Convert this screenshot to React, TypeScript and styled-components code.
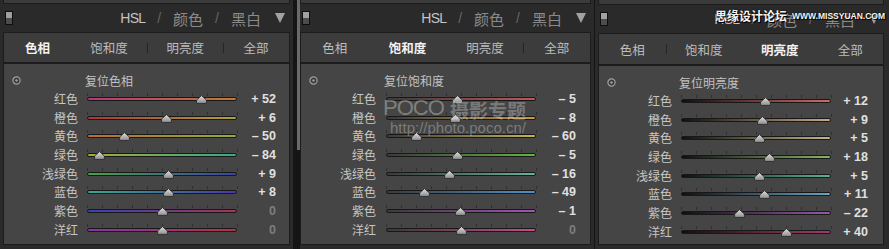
import styled, { createGlobalStyle } from "styled-components";

const Global = createGlobalStyle`
  html, body { margin: 0; padding: 0; background: #161616; }
  body { font-family: "Noto Sans CJK SC", "Liberation Sans", sans-serif; }
  * { box-sizing: border-box; }
`;

type Slider = { name: string; value: number; from: string; to: string };

interface PanelData {
  active: number;
  reset: string;
  w: number;
  pl: number;
  pr: number;
  labelW: number;
  gap: number;
  padR: number;
  strip: number;
  tabsH: number;
  sliders: Slider[];
}

const TABS = ["色相", "饱和度", "明亮度", "全部"];

const Screen = styled.div`
  display: flex;
  width: 889px;
  height: 249px;
  background: #161616;
  overflow: hidden;
`;

const Column = styled.div<{ $w: number; $pl: number; $pr: number }>`
  position: relative;
  flex: none;
  width: ${p => p.$w}px;
  height: 249px;
  padding: 0 ${p => p.$pr}px 0 ${p => p.$pl}px;
  background: #2a2a2a;
  display: flex;
  flex-direction: column;
`;

const Gutter = styled.div<{ $w: number; $bar?: boolean }>`
  flex: none;
  width: ${p => p.$w}px;
  background: #151515;
  display: flex;
  justify-content: flex-end;

  &::after {
    content: "";
    display: ${p => (p.$bar ? "block" : "none")};
    width: 3px;
    height: 150px;
    background: #6a6a6a;
  }
`;

const TopStrip = styled.div<{ $h: number }>`
  height: ${p => p.$h}px;
  background: #3b3b3b;
  border: 1px solid #1c1c1c;
  border-top: none;
`;

const Header = styled.div`
  height: 28px;
  display: flex;
  align-items: center;
  padding: 0 5px 0 2px;
`;

const Toggle = styled.span`
  width: 8px;
  height: 14px;
  border: 1px solid #0e0e0e;
  background: linear-gradient(#a0a0a0 0 50%, #4c4c4c 50% 100%);
`;

const Nav = styled.div`
  margin-left: auto;
  display: flex;
  align-items: center;
  gap: 12px;
`;

const NavItem = styled.span<{ $on?: boolean }>`
  font-size: 15px;
  line-height: 1;
  color: ${p => (p.$on ? "#c4c4c4" : "#8a8a8a")};
`;

const NavLatin = styled(NavItem)`
  font-family: "Liberation Sans", sans-serif;
  font-size: 14px;
  letter-spacing: -0.8px;
`;

const Slash = styled.span`
  font-family: "Liberation Sans", sans-serif;
  font-size: 14px;
  color: #666;
`;

const Arrow = styled.span`
  width: 0;
  height: 0;
  margin-left: 2px;
  border-left: 5px solid transparent;
  border-right: 5px solid transparent;
  border-top: 10px solid #a2a2a2;
`;

const Tabs = styled.div<{ $h: number }>`
  height: ${p => p.$h}px;
  display: grid;
  grid-template-columns: 67fr 77fr 76fr 66fr;
  background: #3c3c3c;
  border: 1px solid #1c1c1c;
`;

const Tab = styled.div<{ $on: boolean }>`
  position: relative;
  display: flex;
  align-items: center;
  justify-content: center;
  font-size: 12.5px;
  font-weight: ${p => (p.$on ? 700 : 400)};
  color: ${p => (p.$on ? "#f2f2f2" : "#bdbdbd")};

  & + &::before {
    content: "";
    position: absolute;
    left: 0;
    top: 50%;
    margin-top: -5px;
    width: 1px;
    height: 10px;
    background: #262626;
  }
`;

const Content = styled.div<{ $padR: number }>`
  flex: 1;
  margin-bottom: 4px;
  padding: 7px ${p => p.$padR}px 0 0;
  background: #454545;
  border: 1px solid #1c1c1c;
`;

const Row = styled.div<{ $labelW: number; $gap: number }>`
  display: grid;
  grid-template-columns: ${p => p.$labelW}px 150px 1fr;
  column-gap: ${p => p.$gap}px;
  align-items: center;
  height: 18.7px;
`;

const ResetIcon = styled.svg`
  margin-left: 8px;
`;

const ResetText = styled.span`
  margin-left: -2px;
  font-size: 12px;
  color: #c2c2c2;
  white-space: nowrap;
`;

const Label = styled.span`
  text-align: right;
  font-size: 12px;
  line-height: 1;
  color: #c6c6c6;
  white-space: nowrap;
`;

const TrackArea = styled.div`
  position: relative;
  height: 100%;
  display: flex;
  align-items: center;

  &::before {
    content: "";
    position: absolute;
    left: 0;
    width: 151px;
    top: calc(50% - 6px);
    height: 3px;
    background: repeating-linear-gradient(90deg, #303030 0 1px, transparent 1px 15px);
  }
`;

const Line = styled.div<{ $from: string; $to: string }>`
  width: 100%;
  height: 4px;
  border: 1px solid #181818;
  border-radius: 2px;
  background: linear-gradient(90deg, ${p => p.$from}, ${p => p.$to});
`;

const Thumb = styled.svg`
  position: absolute;
  top: calc(50% - 4px);
`;

const Value = styled.span<{ $zero: boolean }>`
  text-align: right;
  font-family: "Liberation Sans", sans-serif;
  font-size: 12.5px;
  font-weight: 700;
  color: ${p => (p.$zero ? "#7e7e7e" : "#e0e0e0")};
  white-space: nowrap;
`;

const Mark = styled.span`
  position: absolute;
  white-space: nowrap;
  pointer-events: none;
`;

const PocoMark = styled(Mark)`
  left: 83px;
  top: 95px;
  font-family: "Liberation Sans", sans-serif;
  font-size: 22px;
  letter-spacing: -1px;
  color: rgba(255, 255, 255, 0.33);
`;

const PocoCn = styled(Mark)`
  left: 150px;
  top: 96px;
  font-size: 19px;
  font-weight: 700;
  color: rgba(255, 255, 255, 0.3);
`;

const PocoUrl = styled(Mark)`
  left: 90px;
  top: 119px;
  font-family: "Liberation Sans", sans-serif;
  font-size: 15px;
  color: rgba(255, 255, 255, 0.3);
`;

const SiteCn = styled(Mark)`
  left: 120px;
  top: 7px;
  font-size: 12px;
  font-weight: 700;
  color: #f4f4f4;
  text-shadow: 0 0 2px #000, 1px 1px 0 #000;
`;

const SiteUrl = styled(Mark)`
  left: 197px;
  top: 11px;
  font-family: "Liberation Sans", sans-serif;
  font-size: 8.5px;
  font-weight: 700;
  color: #f4f4f4;
  text-shadow: 0 0 2px #000, 1px 1px 0 #000;
`;

const fmt = (v: number) => (v > 0 ? `+ ${v}` : v < 0 ? `– ${-v}` : "0");

const hue: Slider[] = [
  { name: "红色", value: 52, from: "#b8367e", to: "#c27a34" },
  { name: "橙色", value: 6, from: "#ac3434", to: "#aca43a" },
  { name: "黄色", value: -50, from: "#bc6c34", to: "#8eae3c" },
  { name: "绿色", value: -84, from: "#a4ac38", to: "#38a88c" },
  { name: "浅绿色", value: 9, from: "#44a448", to: "#3844a8" },
  { name: "蓝色", value: 8, from: "#34a890", to: "#4838a8" },
  { name: "紫色", value: 0, from: "#3444b4", to: "#a83458" },
  { name: "洋红", value: 0, from: "#8834a8", to: "#b43440" },
];

const sat: Slider[] = [
  { name: "红色", value: -5, from: "#3a3a3a", to: "#c05858" },
  { name: "橙色", value: -8, from: "#3a3a3a", to: "#c89a48" },
  { name: "黄色", value: -60, from: "#3a3a3a", to: "#c4b454" },
  { name: "绿色", value: -5, from: "#3a3a3a", to: "#64b444" },
  { name: "浅绿色", value: -16, from: "#3a3a3a", to: "#64b4a0" },
  { name: "蓝色", value: -49, from: "#3a3a3a", to: "#5090c8" },
  { name: "紫色", value: -1, from: "#3a3a3a", to: "#a454b8" },
  { name: "洋红", value: 0, from: "#3a3a3a", to: "#c84c88" },
];

const lum: Slider[] = [
  { name: "红色", value: 12, from: "#101010", to: "#d46868" },
  { name: "橙色", value: 9, from: "#101010", to: "#c8a888" },
  { name: "黄色", value: 5, from: "#101010", to: "#c4b888" },
  { name: "绿色", value: 18, from: "#101010", to: "#88b468" },
  { name: "浅绿色", value: 5, from: "#101010", to: "#58b498" },
  { name: "蓝色", value: 11, from: "#101010", to: "#68a4c4" },
  { name: "紫色", value: -22, from: "#101010", to: "#9858a8" },
  { name: "洋红", value: 40, from: "#101010", to: "#a83868" },
];

const panels: PanelData[] = [
  { active: 0, reset: "复位色相", w: 293, pl: 3, pr: 3, labelW: 74, gap: 9, padR: 13, strip: 4, tabsH: 31, sliders: hue },
  { active: 1, reset: "复位饱和度", w: 294, pl: 0, pr: 3, labelW: 75, gap: 10, padR: 14, strip: 4, tabsH: 31, sliders: sat },
  { active: 2, reset: "复位明亮度", w: 294, pl: 3, pr: 5, labelW: 73, gap: 9, padR: 15, strip: 5, tabsH: 32, sliders: lum },
];

const Target = () => (
  <ResetIcon width="9" height="9" viewBox="0 0 9 9">
    <circle cx="4.5" cy="4.5" r="3.6" fill="#3a3a3a" stroke="#a0a0a0" strokeWidth="1.2" />
    <circle cx="4.5" cy="4.5" r="1.2" fill="#a0a0a0" />
  </ResetIcon>
);

const Knob = ({ value }: { value: number }) => (
  <Thumb width="11" height="9" viewBox="0 0 11 9" style={{ left: (150 * (value + 100)) / 200 - 5.5 }}>
    <defs>
      <linearGradient id="knob" x1="0" y1="0" x2="0" y2="1">
        <stop offset="0" stopColor="#e0e0e0" />
        <stop offset="1" stopColor="#8c8c8c" />
      </linearGradient>
    </defs>
    <path d="M5.5 0.6 L10.4 5 L10.4 8.4 L0.6 8.4 L0.6 5 Z" fill="url(#knob)" stroke="#2a2a2a" strokeWidth="0.9" />
  </Thumb>
);

const Panel = ({ data, index }: { data: PanelData; index: number }) => (
  <Column $w={data.w} $pl={data.pl} $pr={data.pr}>
    <TopStrip $h={data.strip} />
    <Header>
      <Toggle />
      <Nav>
        <NavLatin $on>HSL</NavLatin>
        <Slash>/</Slash>
        <NavItem>颜色</NavItem>
        <Slash>/</Slash>
        <NavItem>黑白</NavItem>
        <Arrow />
      </Nav>
    </Header>
    <Tabs $h={data.tabsH}>
      {TABS.map((t, i) => (
        <Tab key={t} $on={i === data.active}>{t}</Tab>
      ))}
    </Tabs>
    <Content $padR={data.padR}>
      <Row $labelW={data.labelW} $gap={data.gap}>
        <Target />
        <ResetText>{data.reset}</ResetText>
      </Row>
      {data.sliders.map(s => (
        <Row key={s.name} $labelW={data.labelW} $gap={data.gap}>
          <Label>{s.name}</Label>
          <TrackArea>
            <Line $from={s.from} $to={s.to} />
            <Knob value={s.value} />
          </TrackArea>
          <Value $zero={s.value === 0}>{fmt(s.value)}</Value>
        </Row>
      ))}
    </Content>
    {index === 1 && (
      <>
        <PocoMark>POCO</PocoMark>
        <PocoCn>摄影专题</PocoCn>
        <PocoUrl>http://photo.poco.cn/</PocoUrl>
      </>
    )}
    {index === 2 && (
      <>
        <SiteCn>思缘设计论坛</SiteCn>
        <SiteUrl>WWW.MISSYUAN.COM</SiteUrl>
      </>
    )}
  </Column>
);

export default function App() {
  return (
    <>
      <Global />
      <Screen>
        <Panel data={panels[0]} index={0} />
        <Gutter $w={7} $bar />
        <Panel data={panels[1]} index={1} />
        <Gutter $w={1} />
        <Panel data={panels[2]} index={2} />
      </Screen>
    </>
  );
}
